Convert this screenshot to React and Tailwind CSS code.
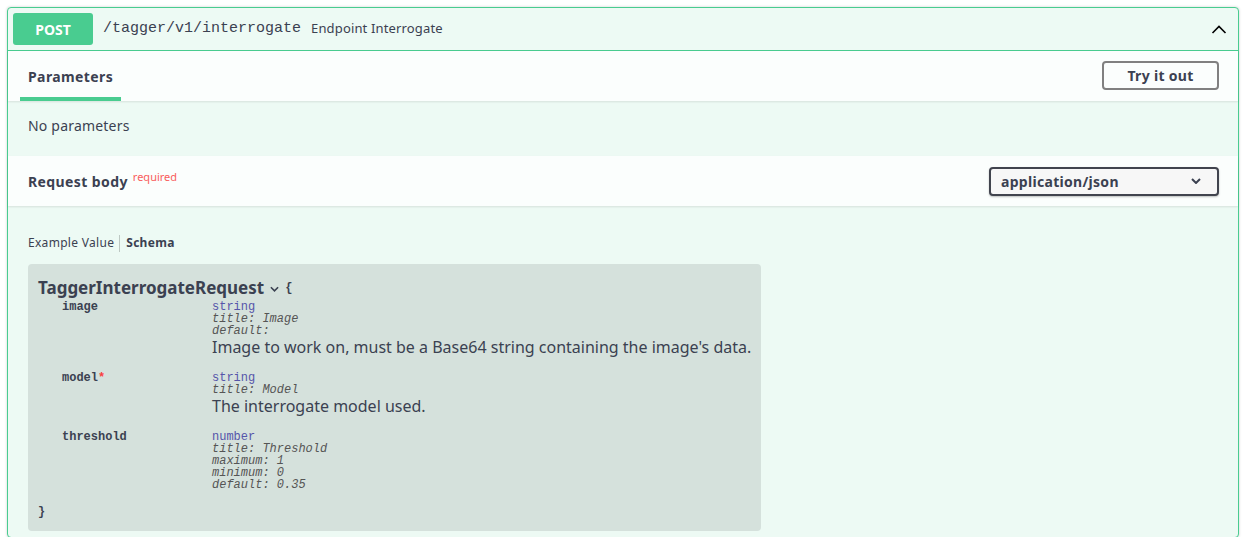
import React from "react";

const sans = { fontFamily: '"Noto Sans", "Open Sans", sans-serif' };

const ChevronUp = () => (
  <svg width="16" height="10" viewBox="0 0 16 10" className="text-black">
    <path d="M1.5 9 L8 2.5 L14.5 9" fill="none" stroke="currentColor" strokeWidth="1.6" />
  </svg>
);

const ChevronDown = ({ w = 10, h = 6, sw = 2 }) => (
  <svg width={w} height={h} viewBox="0 0 10 6">
    <path d="M1 1 L5 5 L9 1" fill="none" stroke="currentColor" strokeWidth={sw} />
  </svg>
);

const props = [
  {
    name: "image",
    type: "string",
    meta: ["title: Image", "default:"],
    desc: "Image to work on, must be a Base64 string containing the image's data.",
  },
  {
    name: "model",
    required: true,
    type: "string",
    meta: ["title: Model"],
    desc: "The interrogate model used.",
  },
  {
    name: "threshold",
    type: "number",
    meta: ["title: Threshold", "maximum: 1", "minimum: 0", "default: 0.35"],
  },
];

const Property = ({ p }) => {
  return (
    <div className="flex pb-[15px]">
      <div className="w-[174px] shrink-0 pl-[24px] font-['Liberation_Mono',monospace] text-[12px] leading-[12px] font-bold text-[#3b4151]">
        {p.name}
        {p.required && <span className="text-[#f93e3e]">*</span>}
      </div>
      <div className="flex flex-col">
        <div className="font-['Liberation_Mono',monospace] text-[12px] leading-[12px] text-[#55a]">
          {p.type}
        </div>
        {p.meta.map((m, i) => (
          <div
            key={i}
            className="font-['Liberation_Mono',monospace] text-[12px] leading-[12px] italic text-[#555]"
          >
            {m}
          </div>
        ))}
        {p.desc && (
          <div className="text-[16px] leading-[20px] whitespace-nowrap text-[#3b4151]" style={sans}>
            {p.desc}
          </div>
        )}
      </div>
    </div>
  );
};

const App = () => {
  return (
    <div className="w-full h-[537px] overflow-hidden bg-white pt-[7px] pl-[7px] pr-[12px]" style={sans}>
      <div className="border border-[#49cc90] rounded-[4px] bg-[#edfaf4] shadow-[0_0_3px_rgba(0,0,0,0.19)]">
        {/* summary */}
        <div className="flex items-center h-[43px] px-[5px] border-b border-[#49cc90]">
          <div className="w-[80px] h-[32px] rounded-[3px] bg-[#49cc90] text-white text-[14px] font-bold flex items-center justify-center">
            POST
          </div>
          <div className="ml-[10px] font-['Liberation_Mono',monospace] text-[15px] text-[#3b4151]">
            /tagger/v1/interrogate
          </div>
          <div className="ml-[10px] text-[13px] tracking-[0.15px] text-[#3b4151]">Endpoint Interrogate</div>
          <div className="ml-auto mr-[6px] flex items-center">
            <ChevronUp />
          </div>
        </div>

        {/* parameters header */}
        <div className="flex items-center justify-between h-[50px] pl-[12px] pr-[19px] bg-[#fbfefd] shadow-[0_1px_2px_rgba(0,0,0,0.1)]">
          <div className="self-stretch flex flex-col justify-center relative px-[8px]">
            <span className="text-[14px] font-bold tracking-[0.4px] text-[#3b4151]">Parameters</span>
            <div className="absolute left-0 right-0 bottom-0 h-[4px] bg-[#49cc90]" />
          </div>
          <button className="w-[117px] h-[29px] border-2 border-[#808080] rounded-[4px] text-[14px] font-bold tracking-[0.3px] text-[#3b4151] bg-transparent -mt-[2px]">
            Try it out
          </button>
        </div>

        <div className="h-[55px] flex items-center pb-[6px] px-[20px] text-[14px] tracking-[0.2px] text-[#3b4151]">
          No parameters
        </div>

        {/* request body header */}
        <div className="flex items-center justify-between h-[50px] pl-[20px] pr-[19px] bg-[#fbfefd] shadow-[0_1px_2px_rgba(0,0,0,0.1)]">
          <div className="flex items-start text-[#3b4151]">
            <span className="text-[14px] font-bold tracking-[0.4px]">Request body</span>
            <span className="ml-[5px] -mt-[2px] text-[11px] text-[#f95c5c]">required</span>
          </div>
          <div className="w-[230px] h-[29px] border-2 border-[#41444e] rounded-[4px] bg-[#f7f7f7] shadow-[0_1px_2px_rgba(0,0,0,0.25)] flex items-center justify-between pl-[10px] pr-[16px] text-[14px] font-bold tracking-[0.3px] text-[#3b4151]">
            <span>application/json</span>
            <ChevronDown w={10} h={6} sw={2} />
          </div>
        </div>

        {/* body */}
        <div className="pt-[28px] px-[20px] pb-[6px]">
          <div className="flex items-center text-[12px] text-[#3b4151]">
            <span className="pr-[5px] tracking-[0.3px]">Example Value</span>
            <span className="w-px h-[17px] bg-[rgba(0,0,0,0.2)]" />
            <span className="pl-[6px] font-bold tracking-[0.3px]">Schema</span>
          </div>
          <div className="mt-[12px] w-[733px] rounded-[4px] bg-[#d5e1dc] pt-[14px] px-[10px] pb-[13px]">
            <div className="flex items-center text-[#3b4151]">
              <span className="text-[17px] font-bold leading-[20px]">TaggerInterrogateRequest</span>
              <span className="ml-[6px] mt-[2px]">
                <ChevronDown w={9} h={6} sw={1.8} />
              </span>
              <span className="ml-[6px] font-['Liberation_Mono',monospace] text-[12px] font-bold">{"{"}</span>
            </div>
            <div className="pt-[3px]">
              {props.map((p) => (
                <Property key={p.name} p={p} />
              ))}
            </div>
            <div className="font-['Liberation_Mono',monospace] text-[12px] font-bold text-[#3b4151] leading-[12px]">
              {"}"}
            </div>
          </div>
        </div>
      </div>
    </div>
  );
};

export default App;
